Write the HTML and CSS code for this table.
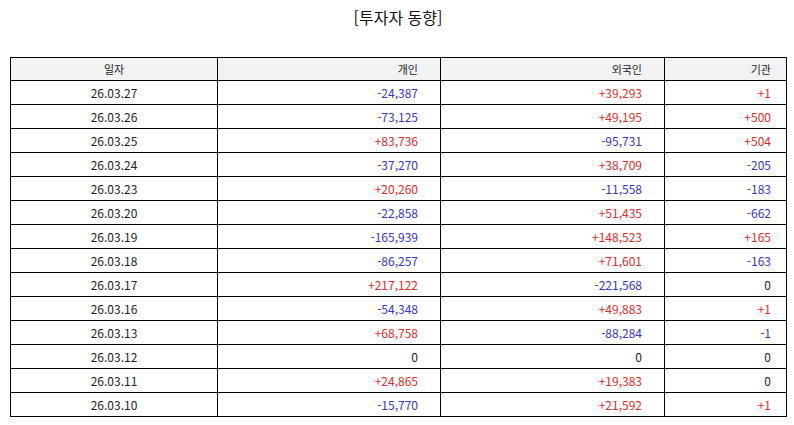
FILE: index.html
```html
<!DOCTYPE html>
<html lang="ko">
<head>
<meta charset="utf-8">
<link rel="stylesheet" href="styles.css">
</head>
<body>
<div class="page">
  <h1 class="title">[투자자 동향]</h1>
  <table class="grid">
    <colgroup>
      <col class="c-date"><col class="c-ind"><col class="c-for"><col class="c-inst">
    </colgroup>
    <thead>
      <tr><th class="date">일자</th><th class="num">개인</th><th class="num">외국인</th><th class="num last">기관</th></tr>
    </thead>
    <tbody>
      <tr><td class="date">26.03.27</td><td class="num dn">-24,387</td><td class="num up">+39,293</td><td class="num last up">+1</td></tr>
      <tr><td class="date">26.03.26</td><td class="num dn">-73,125</td><td class="num up">+49,195</td><td class="num last up">+500</td></tr>
      <tr><td class="date">26.03.25</td><td class="num up">+83,736</td><td class="num dn">-95,731</td><td class="num last up">+504</td></tr>
      <tr><td class="date">26.03.24</td><td class="num dn">-37,270</td><td class="num up">+38,709</td><td class="num last dn">-205</td></tr>
      <tr><td class="date">26.03.23</td><td class="num up">+20,260</td><td class="num dn">-11,558</td><td class="num last dn">-183</td></tr>
      <tr><td class="date">26.03.20</td><td class="num dn">-22,858</td><td class="num up">+51,435</td><td class="num last dn">-662</td></tr>
      <tr><td class="date">26.03.19</td><td class="num dn">-165,939</td><td class="num up">+148,523</td><td class="num last up">+165</td></tr>
      <tr><td class="date">26.03.18</td><td class="num dn">-86,257</td><td class="num up">+71,601</td><td class="num last dn">-163</td></tr>
      <tr><td class="date">26.03.17</td><td class="num up">+217,122</td><td class="num dn">-221,568</td><td class="num last">0</td></tr>
      <tr><td class="date">26.03.16</td><td class="num dn">-54,348</td><td class="num up">+49,883</td><td class="num last up">+1</td></tr>
      <tr><td class="date">26.03.13</td><td class="num up">+68,758</td><td class="num dn">-88,284</td><td class="num last dn">-1</td></tr>
      <tr><td class="date">26.03.12</td><td class="num">0</td><td class="num">0</td><td class="num last">0</td></tr>
      <tr><td class="date">26.03.11</td><td class="num up">+24,865</td><td class="num up">+19,383</td><td class="num last">0</td></tr>
      <tr><td class="date">26.03.10</td><td class="num dn">-15,770</td><td class="num up">+21,592</td><td class="num last up">+1</td></tr>
    </tbody>
  </table>
</div>
</body>
</html>
```
FILE: styles.css
```css
html, body {
  margin: 0;
  padding: 0;
  background: #ffffff;
}
.page {
  padding: 0 8px 0 10px;
  font-family: "Noto Sans CJK KR", "Noto Sans", sans-serif;
  color: #222222;
}
.title {
  margin: 0;
  height: 57px;
  padding-top: 5px;
  box-sizing: border-box;
  text-align: center;
  font-size: 16px;
  font-weight: 400;
  line-height: 24px;
  color: #111111;
}
.grid {
  width: 776px;
  border-collapse: collapse;
  table-layout: fixed;
  font-size: 12px;
}
.c-date { width: 207px; }
.c-ind { width: 223px; }
.c-for { width: 224px; }
.c-inst { width: 122px; }
.grid th, .grid td {
  border: 1px solid #000000;
  height: 23px;
  padding: 0 22px 0 4px;
  line-height: 23px;
  font-weight: 400;
  white-space: nowrap;
  color: #222222;
}
.grid thead th {
  background: #f2f2f2;
  height: 22px;
  line-height: 22px;
  font-size: 11px;
}
.grid .date { text-align: center; padding: 0; }
.grid .num { text-align: right; }
.grid .last { padding-right: 15px; }
.grid .up { color: #e02a2a; }
.grid .dn { color: #3434d0; }
```
